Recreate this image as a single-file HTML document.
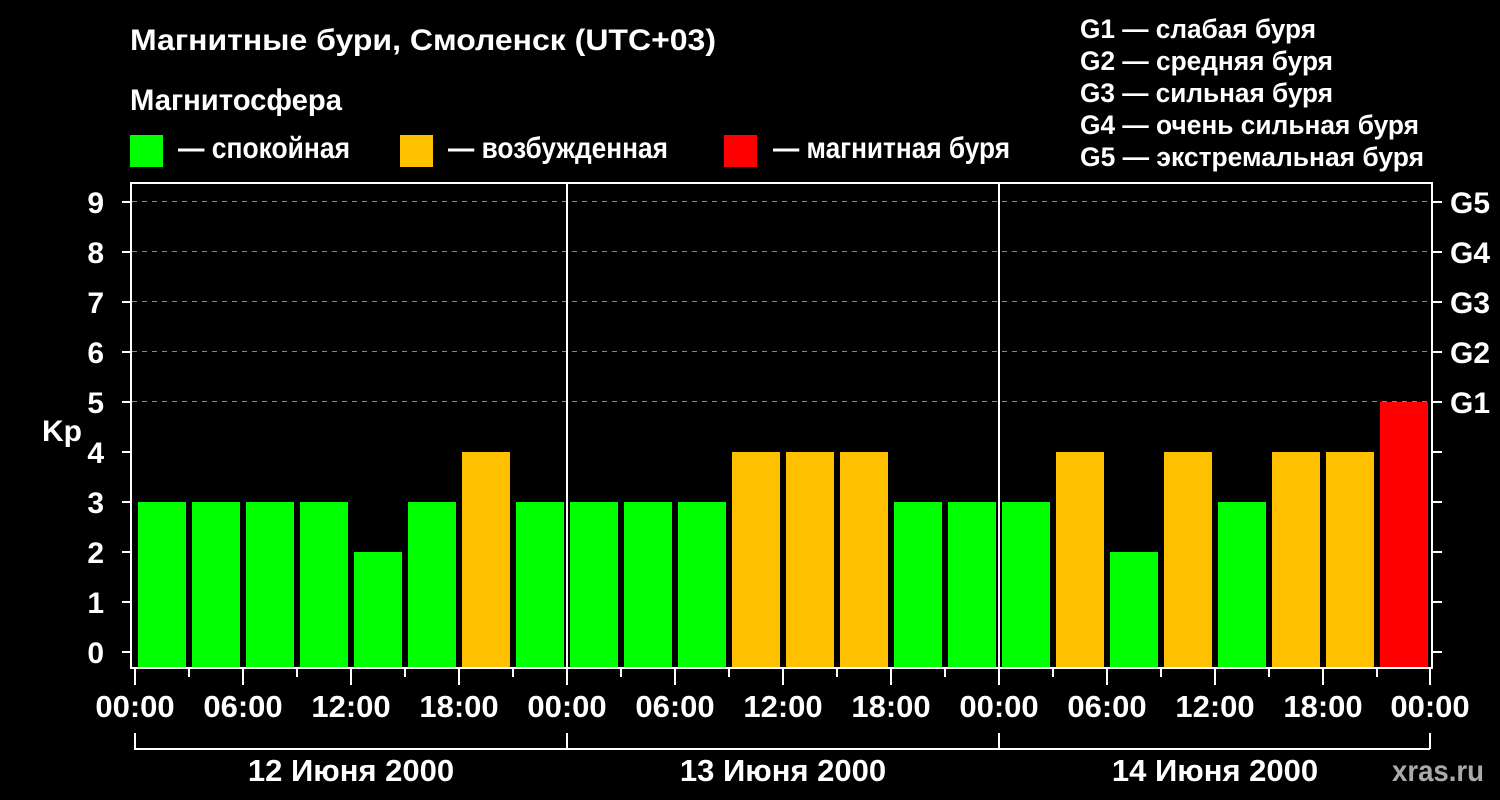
<!DOCTYPE html>
<html><head><meta charset="utf-8"><style>
html,body{margin:0;padding:0;background:#000;}
svg{display:block;font-family:"Liberation Sans",Arial,sans-serif;font-weight:bold;}
</style></head><body>
<svg width="1500" height="800" viewBox="0 0 1500 800" xmlns="http://www.w3.org/2000/svg">
<rect width="1500" height="800" fill="#000"/>
<g fill="#fff" font-size="30">
<text x="130" y="50" textLength="586" lengthAdjust="spacingAndGlyphs">Магнитные бури, Смоленск (UTC+03)</text>
<text x="130" y="110" textLength="212" lengthAdjust="spacingAndGlyphs">Магнитосфера</text>
<text x="178" y="158" textLength="172" lengthAdjust="spacingAndGlyphs">— спокойная</text>
<text x="448" y="158" textLength="220" lengthAdjust="spacingAndGlyphs">— возбужденная</text>
<text x="773" y="158" textLength="237" lengthAdjust="spacingAndGlyphs">— магнитная буря</text>
</g>
<g fill="#fff" font-size="27">
<text x="1080" y="38" textLength="236" lengthAdjust="spacingAndGlyphs">G1 — слабая буря</text>
<text x="1080" y="70" textLength="253" lengthAdjust="spacingAndGlyphs">G2 — средняя буря</text>
<text x="1080" y="102" textLength="253" lengthAdjust="spacingAndGlyphs">G3 — сильная буря</text>
<text x="1080" y="134" textLength="339" lengthAdjust="spacingAndGlyphs">G4 — очень сильная буря</text>
<text x="1080" y="166" textLength="344" lengthAdjust="spacingAndGlyphs">G5 — экстремальная буря</text>
</g>
<rect x="130" y="135" width="33" height="32" fill="#00ff00"/>
<rect x="400" y="135" width="33" height="32" fill="#ffc000"/>
<rect x="724" y="135" width="33" height="32" fill="#ff0000"/>

<g stroke="#888" stroke-width="1" stroke-dasharray="5,5">
<line x1="132" y1="201.5" x2="1431" y2="201.5"/>
<line x1="132" y1="251.5" x2="1431" y2="251.5"/>
<line x1="132" y1="301.5" x2="1431" y2="301.5"/>
<line x1="132" y1="351.5" x2="1431" y2="351.5"/>
<line x1="132" y1="401.5" x2="1431" y2="401.5"/>
</g>

<g>
<rect x="138" y="502" width="48" height="165" fill="#00ff00"/>
<rect x="192" y="502" width="48" height="165" fill="#00ff00"/>
<rect x="246" y="502" width="48" height="165" fill="#00ff00"/>
<rect x="300" y="502" width="48" height="165" fill="#00ff00"/>
<rect x="354" y="552" width="48" height="115" fill="#00ff00"/>
<rect x="408" y="502" width="48" height="165" fill="#00ff00"/>
<rect x="462" y="452" width="48" height="215" fill="#ffc000"/>
<rect x="516" y="502" width="48" height="165" fill="#00ff00"/>
<rect x="570" y="502" width="48" height="165" fill="#00ff00"/>
<rect x="624" y="502" width="48" height="165" fill="#00ff00"/>
<rect x="678" y="502" width="48" height="165" fill="#00ff00"/>
<rect x="732" y="452" width="48" height="215" fill="#ffc000"/>
<rect x="786" y="452" width="48" height="215" fill="#ffc000"/>
<rect x="840" y="452" width="48" height="215" fill="#ffc000"/>
<rect x="894" y="502" width="48" height="165" fill="#00ff00"/>
<rect x="948" y="502" width="48" height="165" fill="#00ff00"/>
<rect x="1002" y="502" width="48" height="165" fill="#00ff00"/>
<rect x="1056" y="452" width="48" height="215" fill="#ffc000"/>
<rect x="1110" y="552" width="48" height="115" fill="#00ff00"/>
<rect x="1164" y="452" width="48" height="215" fill="#ffc000"/>
<rect x="1218" y="502" width="48" height="165" fill="#00ff00"/>
<rect x="1272" y="452" width="48" height="215" fill="#ffc000"/>
<rect x="1326" y="452" width="48" height="215" fill="#ffc000"/>
<rect x="1380" y="402" width="48" height="265" fill="#ff0000"/>
</g>

<g stroke="#fff" stroke-width="2" fill="none">
<rect x="131" y="183" width="1301" height="485"/>
<line x1="567" y1="183" x2="567" y2="668"/>
<line x1="999" y1="183" x2="999" y2="668"/>
<path d="M122 202H131M122 252H131M122 302H131M122 352H131M122 402H131M122 452H131M122 502H131M122 552H131M122 602H131M122 652H131"/>
<path d="M1432 202H1442M1432 252H1442M1432 302H1442M1432 352H1442M1432 402H1442M1432 452H1442M1432 502H1442M1432 552H1442M1432 602H1442M1432 652H1442"/>
<path d="M135 669V685M243 669V685M351 669V685M459 669V685M567 669V685M675 669V685M783 669V685M891 669V685M999 669V685M1107 669V685M1215 669V685M1323 669V685M1430 669V685"/>
<path d="M189 669V677M297 669V677M405 669V677M513 669V677M621 669V677M729 669V677M837 669V677M945 669V677M1053 669V677M1161 669V677M1269 669V677M1377 669V677"/>
<path d="M135 733V749H1430M567 733V749M999 733V749M1430 733V749"/>
</g>

<g fill="#fff" font-size="30" text-anchor="end">
<text x="104" y="213">9</text><text x="104" y="263">8</text><text x="104" y="313">7</text>
<text x="104" y="363">6</text><text x="104" y="413">5</text><text x="104" y="463">4</text>
<text x="104" y="513">3</text><text x="104" y="563">2</text><text x="104" y="613">1</text>
<text x="104" y="663">0</text>
</g>
<text x="42" y="441" fill="#fff" font-size="30">Kp</text>
<g fill="#fff" font-size="30">
<text x="1450" y="213">G5</text><text x="1450" y="263">G4</text><text x="1450" y="313">G3</text>
<text x="1450" y="363">G2</text><text x="1450" y="413">G1</text>
</g>
<g fill="#fff" font-size="31" text-anchor="middle">
<text x="135" y="717">00:00</text><text x="243" y="717">06:00</text><text x="351" y="717">12:00</text>
<text x="459" y="717">18:00</text><text x="567" y="717">00:00</text><text x="675" y="717">06:00</text>
<text x="783" y="717">12:00</text><text x="891" y="717">18:00</text><text x="999" y="717">00:00</text>
<text x="1107" y="717">06:00</text><text x="1215" y="717">12:00</text><text x="1323" y="717">18:00</text>
<text x="1430" y="717">00:00</text>
<text x="351" y="781">12 Июня 2000</text>
<text x="783" y="781">13 Июня 2000</text>
<text x="1215" y="781">14 Июня 2000</text>
</g>
<text x="1392" y="781" fill="#aaa" font-size="30" textLength="92" lengthAdjust="spacingAndGlyphs">xras.ru</text>
</svg>
</body></html>
